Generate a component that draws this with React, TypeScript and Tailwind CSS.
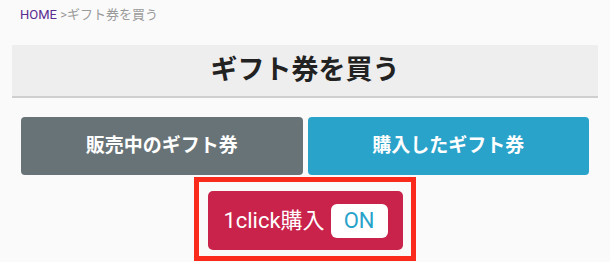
export default function App() {
  return (
    <div
      className="w-[610px] h-[262px] overflow-hidden bg-[#fafafa] px-[12px]"
      style={{ fontFamily: "Roboto, 'Noto Sans CJK JP', sans-serif" }}
    >
      {/* Breadcrumb */}
      <div className="h-[45px] pl-[8px] pt-[6px] text-[13px] leading-[18px]">
        <span className="text-[#5a2d91]">HOME</span>
        <span className="text-[#9a9a9a]"> &gt;ギフト券を買う</span>
      </div>

      {/* Title */}
      <div className="h-[53px] bg-[#eeeeee] border-b-2 border-[#cfcfcf] flex items-center justify-center">
        <h1 className="text-[27px] font-bold text-[#222] leading-none">ギフト券を買う</h1>
      </div>

      {/* Tabs */}
      <div className="mt-[19px] px-[9px] flex gap-[5px]">
        <button className="flex-1 h-[58px] rounded-[4px] bg-[#687377] text-white text-[19px] font-bold">
          販売中のギフト券
        </button>
        <button className="flex-1 h-[58px] rounded-[4px] bg-[#2aa3cb] text-white text-[19px] font-bold">
          購入したギフト券
        </button>
      </div>

      {/* 1click toggle */}
      <div className="mt-[2px] mx-auto w-[222px] h-[84px] border-[5px] border-[#fa2a1c] pt-[9px] pl-[9px]">
        <div className="w-[195px] h-[59px] rounded-[5px] bg-[#c9234b] flex items-center justify-center gap-[6px]">
          <span className="text-white text-[22px] leading-none">1click購入</span>
          <span className="w-[57px] h-[34px] rounded-[6px] bg-white text-[#2aa3cb] text-[22px] flex items-center justify-center leading-none">
            ON
          </span>
        </div>
      </div>
    </div>
  );
}
